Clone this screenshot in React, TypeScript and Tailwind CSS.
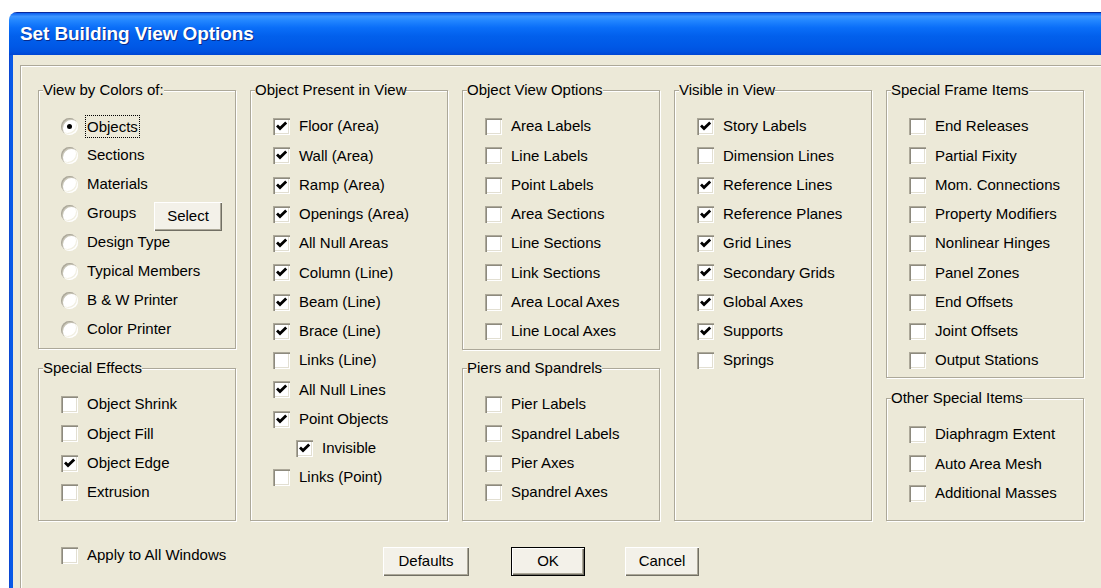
import type { ReactNode } from "react";

type Item = { label: string; checked?: boolean; indent?: boolean };

const objectsPresent: Item[] = [
  { label: "Floor (Area)", checked: true },
  { label: "Wall (Area)", checked: true },
  { label: "Ramp (Area)", checked: true },
  { label: "Openings (Area)", checked: true },
  { label: "All Null Areas", checked: true },
  { label: "Column (Line)", checked: true },
  { label: "Beam (Line)", checked: true },
  { label: "Brace (Line)", checked: true },
  { label: "Links (Line)" },
  { label: "All Null Lines", checked: true },
  { label: "Point Objects", checked: true },
  { label: "Invisible", checked: true, indent: true },
  { label: "Links (Point)" },
];

const viewOptions: Item[] = [
  { label: "Area Labels" },
  { label: "Line Labels" },
  { label: "Point Labels" },
  { label: "Area Sections" },
  { label: "Line Sections" },
  { label: "Link Sections" },
  { label: "Area Local Axes" },
  { label: "Line Local Axes" },
];

const piers: Item[] = [
  { label: "Pier Labels" },
  { label: "Spandrel Labels" },
  { label: "Pier Axes" },
  { label: "Spandrel Axes" },
];

const visible: Item[] = [
  { label: "Story Labels", checked: true },
  { label: "Dimension Lines" },
  { label: "Reference Lines", checked: true },
  { label: "Reference Planes", checked: true },
  { label: "Grid Lines", checked: true },
  { label: "Secondary Grids", checked: true },
  { label: "Global Axes", checked: true },
  { label: "Supports", checked: true },
  { label: "Springs" },
];

const frameItems: Item[] = [
  { label: "End Releases" },
  { label: "Partial Fixity" },
  { label: "Mom. Connections" },
  { label: "Property Modifiers" },
  { label: "Nonlinear Hinges" },
  { label: "Panel Zones" },
  { label: "End Offsets" },
  { label: "Joint Offsets" },
  { label: "Output Stations" },
];

const otherItems: Item[] = [
  { label: "Diaphragm Extent" },
  { label: "Auto Area Mesh" },
  { label: "Additional Masses" },
];

const effects: Item[] = [
  { label: "Object Shrink" },
  { label: "Object Fill" },
  { label: "Object Edge", checked: true },
  { label: "Extrusion" },
];

const colorModes = [
  "Objects",
  "Sections",
  "Materials",
  "Groups",
  "Design Type",
  "Typical Members",
  "B & W Printer",
  "Color Printer",
];

function CheckBox({ checked }: { checked?: boolean }) {
  return (
    <span className="flex h-[17px] w-[17px] shrink-0 items-center justify-center bg-white shadow-[inset_1px_1px_0_#aca899,inset_2px_2px_0_#8d8a7e,inset_-1px_-1px_0_#ffffff,inset_-2px_-2px_0_#e2dfd2]">
      {checked && (
        <svg width="17" height="17" viewBox="0 0 17 17">
          <path d="M4 7.6 L7 10.6 L13.2 4.4" fill="none" stroke="#000" strokeWidth="2.8" />
        </svg>
      )}
    </span>
  );
}

function Radio({ checked }: { checked?: boolean }) {
  return (
    <span className="flex h-[17px] w-[17px] shrink-0 items-center justify-center rounded-full bg-white shadow-[inset_1px_1px_0_#aca899,inset_2px_2px_0_#c9c6b8,inset_-1px_-1px_0_#ffffff,inset_-2px_-2px_0_#f1efe2]">
      {checked && <span className="h-[5px] w-[5px] rounded-full bg-black" />}
    </span>
  );
}

function Row({ item }: { item: Item }) {
  return (
    <div className={`flex h-[29.25px] items-center ${item.indent ? "pl-[23px]" : ""}`}>
      <CheckBox checked={item.checked} />
      <span className="ml-[9px] whitespace-nowrap">{item.label}</span>
    </div>
  );
}

function GroupBox({
  title,
  className,
  children,
}: {
  title: string;
  className?: string;
  children: ReactNode;
}) {
  return (
    <div
      className={`relative border border-[#aca899] pl-[22px] pt-[21px] shadow-[inset_1px_1px_0_#ffffff,1px_1px_0_#ffffff] ${className ?? ""}`}
    >
      <span className="absolute -top-[10px] left-[4px] bg-[#ece9d8] leading-[18px] whitespace-nowrap">
        {title}
      </span>
      {children}
    </div>
  );
}

function Button({ label, width, isDefault }: { label: string; width: string; isDefault?: boolean }) {
  return (
    <button
      className={`flex h-[29px] items-center justify-center bg-[#f3f1e9] ${width} ${
        isDefault
          ? "border border-black shadow-[inset_1px_1px_0_#ffffff,inset_-1px_-1px_0_#716f64,inset_-2px_-2px_0_#aca899]"
          : "shadow-[inset_1px_1px_0_#ffffff,inset_-1px_-1px_0_#716f64,inset_-2px_-2px_0_#aca899]"
      }`}
    >
      {label}
    </button>
  );
}

export default function App() {
  return (
    <div className="relative h-[588px] w-[1101px] overflow-hidden bg-white font-['Liberation_Sans',Arial,sans-serif] text-[15px] text-black">
      <div className="ml-[9px] mt-[12px] w-[1110px] overflow-hidden rounded-tl-[8px]">
        {/* title bar */}
        <div className="flex h-[43px] items-center border-t border-[#0a2a9a] bg-[linear-gradient(180deg,#0a5ef0_0%,#3d95ff_8%,#2286ff_18%,#0a6ef8_35%,#0260ec_55%,#0058e6_80%,#0052e0_92%,#0046d4_100%)] pl-[11px]">
          <span className="text-[19px] font-bold tracking-[-0.1px] text-white [text-shadow:1px_1px_0_#0a2a8a]">
            Set Building View Options
          </span>
        </div>

        <div className="flex">
          <div className="w-[4px] shrink-0 bg-[linear-gradient(90deg,#0b3fc8,#0a5ae8_40%,#0758e6)]" />
          <div className="h-[540px] flex-1 bg-[#ece9d8] pl-[7px] pt-[10px]">
            <div className="h-[560px] border border-[#aca899] pl-[17px] pt-[24px] shadow-[inset_1px_1px_0_#ffffff,1px_1px_0_#ffffff]">
              <div className="flex gap-[14px]">
                {/* column 1 */}
                <div className="flex h-[431px] w-[198px] flex-col gap-[19px]">
                  <GroupBox title="View by Colors of:" className="h-[259px]">
                    {colorModes.map((m, i) => (
                      <div key={m} className="flex h-[29px] items-center">
                        <Radio checked={i === 0} />
                        {i === 0 ? (
                          <span className="ml-[7px] border border-dotted border-black px-[1px] py-[2px] leading-[17px]">
                            {m}
                          </span>
                        ) : (
                          <span className={`ml-[9px] whitespace-nowrap ${m === "Groups" ? "w-[67px]" : ""}`}>
                            {m}
                          </span>
                        )}
                        {m === "Groups" && (
                          <span className="mt-[6px]">
                            <Button label="Select" width="w-[68px]" />
                          </span>
                        )}
                      </div>
                    ))}
                  </GroupBox>
                  <GroupBox title="Special Effects" className="flex-1">
                    {effects.map((it) => (
                      <Row key={it.label} item={it} />
                    ))}
                  </GroupBox>
                </div>

                {/* column 2 */}
                <div className="flex h-[431px] w-[198px] flex-col">
                  <GroupBox title="Object Present in View" className="flex-1">
                    {objectsPresent.map((it) => (
                      <Row key={it.label} item={it} />
                    ))}
                  </GroupBox>
                </div>

                {/* column 3 */}
                <div className="flex h-[431px] w-[198px] flex-col gap-[18px]">
                  <GroupBox title="Object View Options" className="h-[260px]">
                    {viewOptions.map((it) => (
                      <Row key={it.label} item={it} />
                    ))}
                  </GroupBox>
                  <GroupBox title="Piers and Spandrels" className="flex-1">
                    {piers.map((it) => (
                      <Row key={it.label} item={it} />
                    ))}
                  </GroupBox>
                </div>

                {/* column 4 */}
                <div className="flex h-[431px] w-[198px] flex-col">
                  <GroupBox title="Visible in View" className="flex-1">
                    {visible.map((it) => (
                      <Row key={it.label} item={it} />
                    ))}
                  </GroupBox>
                </div>

                {/* column 5 */}
                <div className="flex h-[431px] w-[198px] flex-col gap-[20px]">
                  <GroupBox title="Special Frame Items" className="h-[288px]">
                    {frameItems.map((it) => (
                      <Row key={it.label} item={it} />
                    ))}
                  </GroupBox>
                  <GroupBox title="Other Special Items" className="flex-1">
                    {otherItems.map((it) => (
                      <Row key={it.label} item={it} />
                    ))}
                  </GroupBox>
                </div>
              </div>

              {/* bottom row */}
              <div className="mt-[23px] flex items-start">
                <div className="flex w-[345px] items-center pl-[23px]">
                  <CheckBox />
                  <span className="ml-[9px]">Apply to All Windows</span>
                </div>
                <div className="mt-[3px] flex">
                  <Button label="Defaults" width="w-[86px]" />
                  <span className="ml-[42px]">
                    <Button label="OK" width="w-[74px]" isDefault />
                  </span>
                  <span className="ml-[40px]">
                    <Button label="Cancel" width="w-[74px]" />
                  </span>
                </div>
              </div>
            </div>
          </div>
        </div>
      </div>
    </div>
  );
}
